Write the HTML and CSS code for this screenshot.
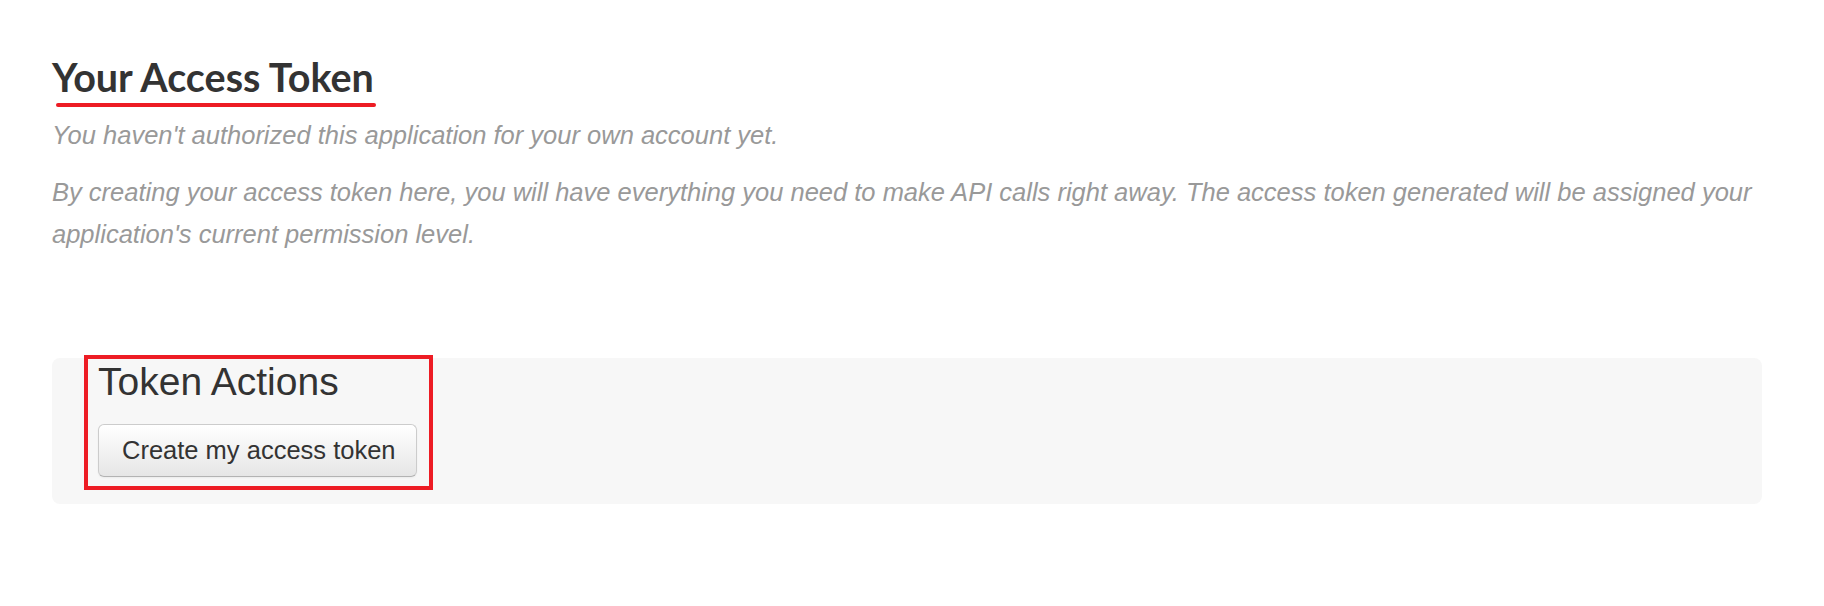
FILE: index.html
```html
<!DOCTYPE html>
<html lang="en">
<head>
<meta charset="utf-8">
<title>Your Access Token</title>
<link rel="stylesheet" href="styles.css">
</head>
<body>
<main class="page">
  <section class="token-intro">
    <h1 class="title">Your Access Token</h1>
    <p class="note">You haven't authorized this application for your own account yet.</p>
    <p class="note">By creating your access token here, you will have everything you need to make API calls right away. The access token generated will be assigned your application's current permission level.</p>
  </section>
  <section class="actions-box">
    <div class="highlight">
      <h2 class="actions-title">Token Actions</h2>
      <button class="btn" type="button">Create my access token</button>
    </div>
  </section>
</main>
</body>
</html>
```
FILE: styles.css
```css
html, body {
  margin: 0;
  padding: 0;
  background: #ffffff;
}

.page {
  width: 1710px;
  padding: 0 0 0 52px;
  font-family: "Liberation Sans", Arial, sans-serif;
}

.token-intro {
  padding-top: 53px;
}

.title {
  display: inline-block;
  margin: 0 0 7px 0;
  font-family: Lato, "Noto Sans", sans-serif;
  font-weight: 700;
  font-size: 39.5px;
  line-height: 47px;
  color: #333333;
}

.title::after {
  content: "";
  display: block;
  height: 4px;
  margin: 3px -2px 0 4px;
  border-radius: 2px;
  background: #ed1c24;
}

.note {
  margin: 0 0 15px 0;
  font-style: italic;
  font-size: 25.5px;
  line-height: 42px;
  color: #999999;
}

.actions-box {
  margin-top: 103px;
  padding: 0 0 14px 32px;
  background: #f7f7f7;
  border-radius: 8px;
}

.highlight {
  display: inline-block;
  margin-top: -3px;
  padding: 2px 12px 9px 10px;
  border: 4px solid #ed1c24;
}

.actions-title {
  margin: 0 0 21px 0;
  font-weight: 400;
  font-size: 39px;
  line-height: 42px;
  color: #333333;
}

.btn {
  display: block;
  margin: 0;
  padding: 0 20px 0 23px;
  height: 53px;
  font-family: "Liberation Sans", Arial, sans-serif;
  font-size: 25.5px;
  line-height: 51px;
  color: #333333;
  background: linear-gradient(#ffffff, #e6e6e6);
  border: 1px solid #cccccc;
  border-bottom-color: #b3b3b3;
  border-radius: 6px;
  box-shadow: inset 0 1px 0 rgba(255,255,255,0.2), 0 1px 2px rgba(0,0,0,0.05);
}
```
